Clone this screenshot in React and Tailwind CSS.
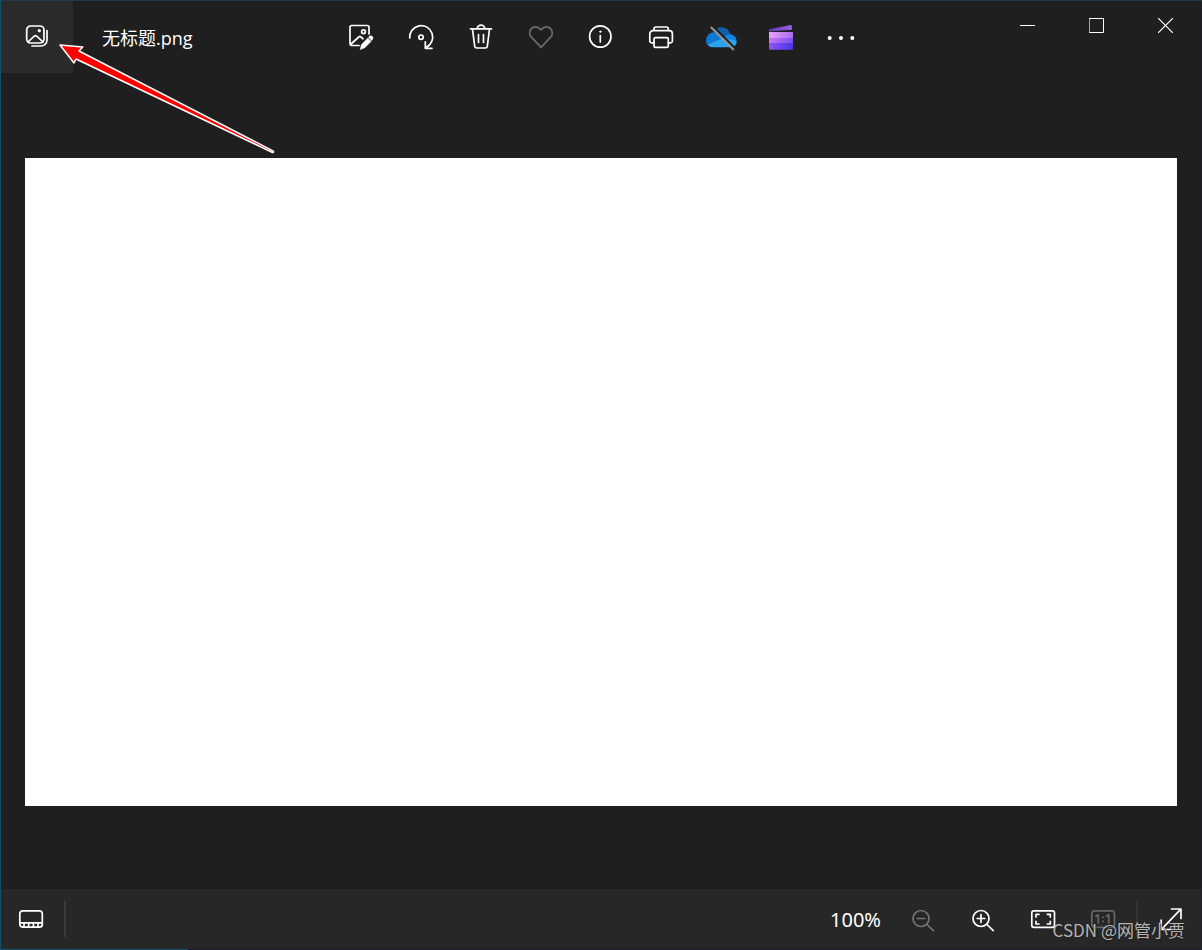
import React from "react";

function Icon({ children, className = "size-8", box = "0 0 32 32" }) {
  return (
    <svg
      viewBox={box}
      className={className}
      fill="none"
      stroke="currentColor"
      strokeWidth="1.7"
      strokeLinecap="round"
      strokeLinejoin="round"
      aria-hidden="true"
    >
      {children}
    </svg>
  );
}

function ToolButton({ label, children, tone = "text-white", size = "h-[72px] w-[60px]", ...rest }) {
  return (
    <button
      type="button"
      aria-label={label}
      className={`flex shrink-0 items-center justify-center ${size} ${tone}`}
      {...rest}
    >
      {children}
    </button>
  );
}

const GalleryIcon = () => (
  <Icon>
    <rect x="5.700" y="5" width="17.300" height="17" rx="4" />
    <path d="M26 9.500v9.500a6 6 0 0 1-6 6H11M7 21l6-5.700a2.200 2.200 0 0 1 3 0l6 5.700" />
    <circle cx="18.300" cy="9.700" r="1.200" fill="currentColor" strokeWidth="1" />
  </Icon>
);

const EditIcon = () => (
  <Icon>
    <path d="M24 13V6.300a1.800 1.800 0 0 0-1.800-1.800H6.800A1.800 1.800 0 0 0 5 6.300v15.900A2.300 2.300 0 0 0 7.300 24.500H14M6 23l7.800-7a1.600 1.600 0 0 1 2.200 0l2 1.800" />
    <circle cx="18.500" cy="10.700" r="1.900" />
    <path
      d="M15.300 28.200l1.200-4.600 6.300-6.400 3.200 3.200-6.300 6.400zM23.500 16.300l.7-.8a2.150 2.150 0 0 1 3.100 3.100l-.7.8z"
      fill="currentColor"
      strokeWidth=".6"
    />
  </Icon>
);

const RotateIcon = () => (
  <Icon>
    <path d="M4.700 17A11.500 11.500 0 1 1 21 26.500M20.300 20.800v6.500h6.700" />
    <circle cx="16" cy="16.200" r="2.200" />
  </Icon>
);

const TrashIcon = () => (
  <Icon>
    <path d="M5.500 7.800h21M7.500 8l2.200 17.300A2 2 0 0 0 11.700 27h8.600a2 2 0 0 0 2-1.700L24.500 8M12.300 7.500a3.700 3.300 0 0 1 7.400 0M13.500 13.500v8M18.500 13.500v8" />
  </Icon>
);

const HeartIcon = () => (
  <Icon>
    <path d="M16 9l-1.300-1.300a5.700 5.700 0 0 0-8.300 0 6.100 6.100 0 0 0 0 8.500L16 26.300l9.600-10.100a6.100 6.100 0 0 0 0-8.500 5.700 5.700 0 0 0-8.300 0z" />
  </Icon>
);

const InfoIcon = () => (
  <Icon>
    <circle cx="15.300" cy="15.500" r="10.700" />
    <path d="M15.300 14.500v6.500" />
    <circle cx="15.300" cy="10.700" r=".7" fill="currentColor" strokeWidth="1" />
  </Icon>
);

const PrintIcon = () => (
  <Icon>
    <path d="M9 21.800H6.600a1.800 1.800 0 0 1-1.800-1.800v-7.200a3.200 3.200 0 0 1 3.200-3.200h16.200a3.200 3.200 0 0 1 3.200 3.200V20a1.800 1.800 0 0 1-1.800 1.800H23.300M9 9.500V8a2 2 0 0 1 2-2h10.300a2 2 0 0 1 2 2v1.500" />
    <rect x="9" y="16.700" width="14.300" height="9.700" rx="1.500" />
  </Icon>
);

const CloudOffIcon = () => (
  <Icon>
    <g stroke="none">
      <path d="M8.500 11.500A9 9 0 0 1 25.300 13L21 18.500z" fill="#0d5fb0" />
      <path d="M8.300 11.300a8 8 0 0 0-5.500 13L19 18l-4.500-5a9 9 0 0 0-6.200-1.700z" fill="#0d78d3" />
      <path d="M17.500 17.500l4.300-3.500a7 7 0 0 1 9.700 4L27.500 24z" fill="#1683dc" />
      <path d="M2.500 23.800L17.800 17.300 31.700 19.500a6 6 0 0 1-5.700 6.800H8.500a6.500 6.500 0 0 1-6-2.500z" fill="#29a5ed" />
    </g>
    <path d="M7.500 4.800l23 23" stroke="#1f1f1f" strokeWidth="2" />
    <path d="M5.800 6l23 23" stroke="#929292" strokeWidth="2.200" strokeLinecap="butt" />
  </Icon>
);

const ClipIcon = () => (
  <Icon>
    <defs>
      <linearGradient id="clipLid" x1="0" x2="1">
        <stop stopColor="#5a35b4" />
        <stop offset="1" stopColor="#9d63df" />
      </linearGradient>
      <linearGradient id="clipTop" x1="0" x2="1">
        <stop stopColor="#eaa4f7" />
        <stop offset="1" stopColor="#a66bee" />
      </linearGradient>
      <linearGradient id="clipMid" x1="0" x2="1">
        <stop stopColor="#c478f2" />
        <stop offset="1" stopColor="#7650f2" />
      </linearGradient>
      <linearGradient id="clipLow" x1="0" x2="1">
        <stop stopColor="#8e55ef" />
        <stop offset="1" stopColor="#4937ee" />
      </linearGradient>
    </defs>
    <g stroke="none">
      <path d="M4 10.500V9a1 1 0 0 1 .8-1L25.500 4a1 1 0 0 1 1.200.8l.4 4z" fill="url(#clipLid)" />
      <path d="M4 11h24v6H4z" fill="url(#clipTop)" />
      <path d="M4 17h24v5H4z" fill="url(#clipMid)" />
      <path d="M4 22h24v5.500a1.300 1.300 0 0 1-1.300 1.300H5.300A1.300 1.300 0 0 1 4 27.500z" fill="url(#clipLow)" />
    </g>
  </Icon>
);

const MoreIcon = () => (
  <Icon>
    <g fill="currentColor" stroke="none">
      <circle cx="4.700" cy="17" r="2" />
      <circle cx="16" cy="17" r="2" />
      <circle cx="27.300" cy="17" r="2" />
    </g>
  </Icon>
);

const FilmstripIcon = () => (
  <Icon>
    <rect x="4.800" y="7.800" width="22.500" height="16.400" rx="3" />
    <path d="M5 19.800h22M9 20v4M13.700 20v4M18.400 20v4M23 20v4" strokeLinecap="butt" />
  </Icon>
);

const ZoomIcon = ({ plus }) => (
  <Icon>
    <circle cx="14" cy="15.500" r="8" />
    <path d="M20 21.500l6.300 6.200M10.200 15.500h7.600" />
    {plus && <path d="M14 11.700v7.600" />}
  </Icon>
);

const FitIcon = () => (
  <Icon>
    <rect x="4.800" y="7.800" width="22.700" height="16.500" rx="2" />
    <path d="M9 14v-2.700h3M20.300 11.300h3V14M23.300 18.300V21h-3M12 21H9v-2.700" />
  </Icon>
);

const ActualIcon = () => (
  <Icon>
    <rect x="4.800" y="7.800" width="22.700" height="16.500" rx="3" />
    <path d="M9 13.300l2.300-1.500V20M19.500 13.300l2.300-1.500V20M16 14v.5M16 18v.5" />
  </Icon>
);

const ExpandIcon = () => (
  <Icon>
    <path d="M6.500 26.300L25.800 6.200M16.500 6h9.500v9.500M6.200 17v9.500h9.500" />
  </Icon>
);

export default function App() {
  return (
    <div className="relative flex min-h-screen flex-col overflow-hidden border border-t-[#24384a] border-r-[#1b1f2b] border-b-0 border-l-[#155069] bg-[#1f1f1f] font-['Noto_Sans','Noto_Sans_CJK_SC',sans-serif] text-white">
      <header className="grid h-[72px] grid-cols-[1fr_auto_1fr] items-start">
        <div className="flex items-center">
          <ToolButton label="图库" size="size-[72px]" tone="bg-[#2b2b2b] text-white">
            <GalleryIcon />
          </ToolButton>
          <h1 className="ml-[29px] pt-0.5 text-lg leading-6 font-normal font-['Open_Sans','Noto_Sans_CJK_SC',sans-serif]">无标题.png</h1>
        </div>
        <nav className="flex">
          <ToolButton label="编辑图像"><EditIcon /></ToolButton>
          <ToolButton label="旋转"><RotateIcon /></ToolButton>
          <ToolButton label="删除"><TrashIcon /></ToolButton>
          <ToolButton label="添加到收藏夹" tone="text-[#6b6b6b]" disabled><HeartIcon /></ToolButton>
          <ToolButton label="信息"><InfoIcon /></ToolButton>
          <ToolButton label="打印"><PrintIcon /></ToolButton>
          <ToolButton label="OneDrive"><CloudOffIcon /></ToolButton>
          <ToolButton label="Clipchamp"><ClipIcon /></ToolButton>
          <ToolButton label="更多"><MoreIcon /></ToolButton>
        </nav>
        <div className="flex justify-end pr-px">
          <ToolButton label="最小化" size="h-[49px] w-[69px]">
            <Icon className="size-[15px]" box="0 0 15 15"><path d="M0 7.500h15" strokeWidth="1" strokeLinecap="butt" /></Icon>
          </ToolButton>
          <ToolButton label="最大化" size="h-[49px] w-[69px]">
            <Icon className="size-[15px]" box="0 0 15 15"><path d="M.5.5h14v14H.5z" strokeWidth="1" strokeLinejoin="miter" /></Icon>
          </ToolButton>
          <ToolButton label="关闭" size="h-[49px] w-[69px]">
            <Icon className="size-[15px]" box="0 0 15 15"><path d="M0 0l15 15M15 0L0 15" strokeWidth="1.200" strokeLinecap="butt" /></Icon>
          </ToolButton>
        </div>
      </header>

      <main className="flex flex-1 items-center justify-center px-6 pt-0.5">
        <div role="img" aria-label="无标题.png" className="aspect-video w-full bg-white" />
      </main>

      <footer className="flex h-[60px] items-center bg-[#272727]">
        <ToolButton label="胶片" size="size-[60px]"><FilmstripIcon /></ToolButton>
        <div className="ml-[3px] h-9 w-0.5 bg-[#3a3a3a]" />
        <div className="ml-auto flex items-center">
          <span className="mr-3 pt-0.5 text-xl leading-7">100%</span>
          <ToolButton label="缩小" size="size-[60px]" tone="text-[#737373]" disabled><ZoomIcon /></ToolButton>
          <ToolButton label="放大" size="size-[60px]"><ZoomIcon plus /></ToolButton>
          <ToolButton label="缩放以适应" size="size-[60px]"><FitIcon /></ToolButton>
          <ToolButton label="实际大小" size="size-[60px]" tone="text-[#666666]" disabled><ActualIcon /></ToolButton>
          <div className="mr-[3px] ml-[3px] h-9 w-0.5 bg-[#333333]" />
          <ToolButton label="全屏" size="size-[60px]"><ExpandIcon /></ToolButton>
        </div>
      </footer>
      <div className="h-px bg-[#1b1f36]">
        <div className="h-px w-[187px] bg-[#155069]" />
      </div>

      <svg
        viewBox="0 0 224 120"
        className="pointer-events-none absolute top-[37px] left-[54px] h-[120px] w-56"
        aria-hidden="true"
      >
        <path
          d="M5 7L27.800 9L24 13L218 112.800Q219.500 114.500 217.500 114.500L21 21L19 25Z"
          fill="#ff0000"
          stroke="#ffffff"
          strokeWidth="1.500"
          strokeLinejoin="round"
        />
      </svg>

      <p className="pointer-events-none absolute right-4 bottom-2 text-[17px] leading-6 text-[#b4b4b4] font-['Noto_Sans_CJK_SC',sans-serif] [text-shadow:1px_1px_1px_#1f1f1f]">
        CSDN @网管小贾
      </p>
    </div>
  );
}
